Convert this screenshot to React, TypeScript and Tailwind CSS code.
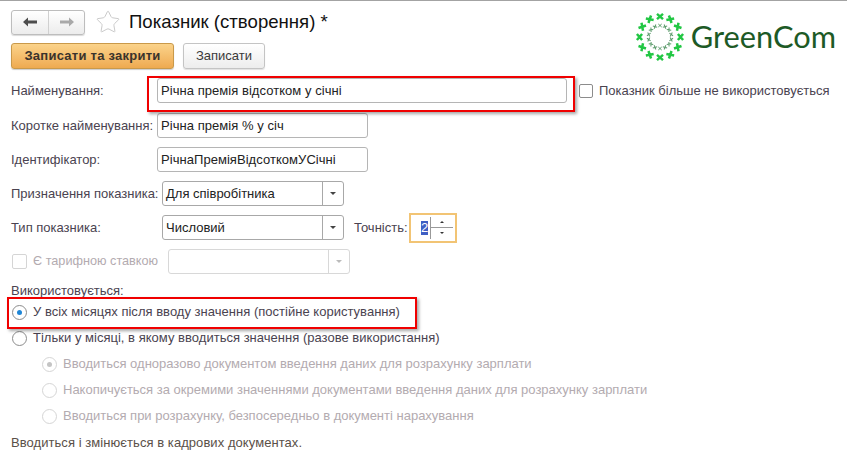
import { Star } from "lucide-react";

const outerAngles = Array.from({ length: 12 }, (_, i) => i * 30);
const innerAngles = Array.from({ length: 14 }, (_, i) => (i * 360) / 14);

function Logo() {
  return (
    <div className="flex items-center">
      <svg width="54" height="54" viewBox="-27 -27 54 54">
        {outerAngles.map((a) => (
          <g key={a} transform={`rotate(${a}) translate(0 -20.5)`} stroke="#22c744" strokeWidth="2.5">
            <path d="M-3 -2.6L3 2.6M-3 2.6L3 -2.6" />
          </g>
        ))}
        {innerAngles.map((a) => (
          <g key={a} transform={`rotate(${a}) translate(0 -11.5)`} stroke="#5a9a6a" strokeWidth="1">
            <path d="M-1.7 -1.5L1.7 1.5M-1.7 1.5L1.7 -1.5" />
          </g>
        ))}
      </svg>
      <span className="ml-[4px] font-['Lato',sans-serif] text-[30.8px] leading-none text-[#1d5a26]">GreenCom</span>
    </div>
  );
}

function TextInput({ value, className }: { value: string; className: string }) {
  return (
    <div className={`flex h-[25px] items-center rounded-[3px] border border-[#b5b5b5] bg-white pl-[3px] text-[13px] tracking-[0.05px] text-[#222] ${className}`}>
      {value}
    </div>
  );
}

function Combo({ value, disabled, className }: { value?: string; disabled?: boolean; className: string }) {
  return (
    <div className={`flex h-[25px] w-[182px] items-center rounded-[3px] border bg-white ${disabled ? "border-[#d8d8d8]" : "border-[#a8a8a8]"} ${className}`}>
      <span className="flex-1 pl-[3px] text-[13px] text-[#222]">{value}</span>
      <span className={`flex h-full w-[21px] items-center justify-center border-l ${disabled ? "border-[#d8d8d8]" : "border-[#a8a8a8]"}`}>
        <span className={`border-x-[3px] border-t-[3px] border-x-transparent ${disabled ? "border-t-[#bbb]" : "border-t-[#444]"}`} />
      </span>
    </div>
  );
}

function Radio({ checked, disabled }: { checked?: boolean; disabled?: boolean }) {
  return (
    <span className={`flex size-[15px] shrink-0 items-center justify-center rounded-full border bg-white ${disabled ? "border-[#d5d5d5]" : "border-[#8c8c8c]"}`}>
      {checked && <span className={`size-[5px] rounded-full ${disabled ? "bg-[#c4c4c4]" : "bg-[#1f86d6]"}`} />}
    </span>
  );
}

function RadioRow({ label, checked, disabled, className }: { label: string; checked?: boolean; disabled?: boolean; className: string }) {
  return (
    <div className={`flex items-center gap-[6px] text-[13px] leading-[16px] ${disabled ? "text-[#b3abb0]" : "tracking-[0.02px] text-[#4a4350]"} ${className}`}>
      <Radio checked={checked} disabled={disabled} />
      <span>{label}</span>
    </div>
  );
}

function Label({ children, className }: { children: string; className: string }) {
  return <span className={`shrink-0 text-[13px] text-[#4a4350] ${className}`}>{children}</span>;
}

export default function App() {
  return (
    <div className="relative h-[464px] w-[847px] overflow-hidden border-t border-[#a3a3a3] bg-white font-['Liberation_Sans',Arial,sans-serif]">
      <div className="flex h-[42px] items-start justify-between pl-[11px] pr-[11px]">
        <div className="flex items-center pt-[8px]">
          <div className="flex h-[25px] w-[74px] rounded-[3px] border border-[#bdbdbd] bg-gradient-to-b from-white to-[#ececec] shadow-[0_1px_1px_rgba(0,0,0,0.15)]">
            <span className="flex w-[37px] items-center justify-center border-r border-[#d0d0d0]">
              <svg width="14" height="10" viewBox="0 0 14 10"><path d="M0 5L5 0.5V3.5H14V6.5H5V9.5Z" fill="#4d4d4d" /></svg>
            </span>
            <span className="flex flex-1 items-center justify-center">
              <svg width="14" height="10" viewBox="0 0 14 10"><path d="M14 5L9 0.5V3.5H0V6.5H9V9.5Z" fill="#a9a9a9" /></svg>
            </span>
          </div>
          <Star className="ml-[10px] size-[26px] text-[#c9c9c9]" strokeWidth={0.9} />
          <span className="ml-[8px] text-[18.6px] leading-none text-[#111]">Показник (створення) *</span>
        </div>
        <div className="pt-[9px]"><Logo /></div>
      </div>

      <div className="flex gap-[9px] pl-[11px]">
        <button className="h-[26px] w-[163px] rounded-[3px] border border-[#c9994a] bg-gradient-to-b from-[#fbd38a] to-[#eeaa50] text-[13px] font-bold tracking-[0.25px] text-[#3a332c] shadow-[0_1px_1px_rgba(0,0,0,0.2)]">
          Записати та закрити
        </button>
        <button className="h-[26px] w-[82px] rounded-[3px] border border-[#c4c4c4] bg-gradient-to-b from-white to-[#ededed] text-[13px] text-[#3a3a3a] shadow-[0_1px_1px_rgba(0,0,0,0.12)]">
          Записати
        </button>
      </div>

      <div className="mt-[9px] flex flex-col pl-[11px]">
        <div className="flex h-[25px] items-center">
          <Label className="w-[146px]">Найменування:</Label>
          <TextInput value="Річна премія відсотком у січні" className="w-[410px]" />
          <span className="ml-[12px] size-[14px] rounded-[2px] border border-[#8c8c8c] bg-white" />
          <span className="ml-[6px] text-[13px] text-[#4a4350]">Показник більше не використовується</span>
        </div>
        <div className="mt-[10px] flex h-[25px] items-center">
          <Label className="w-[146px]">Коротке найменування:</Label>
          <TextInput value="Річна премія % у січ" className="w-[211px]" />
        </div>
        <div className="mt-[9px] flex h-[25px] items-center">
          <Label className="w-[146px]">Ідентифікатор:</Label>
          <TextInput value="РічнаПреміяВідсоткомУСічні" className="w-[211px]" />
        </div>
        <div className="mt-[9px] flex h-[25px] items-center">
          <Label className="w-[151px]">Призначення показника:</Label>
          <Combo value="Для співробітника" className="" />
        </div>
        <div className="mt-[9px] flex h-[25px] items-center">
          <Label className="w-[151px]">Тип показника:</Label>
          <Combo value="Числовий" className="" />
          <Label className="ml-[10px] w-[55px]">Точність:</Label>
          <div className="flex h-[30px] w-[48px] items-center border-2 border-[#f2c474] pl-[10px] pr-[2px]">
            <span className="bg-[#3f5fc4] text-[13px] leading-[14px] text-white">2</span>
            <span className="ml-[2px] flex h-[22px] flex-1 flex-col items-center border-l border-[#999]">
              <span className="flex h-1/2 w-full items-center justify-center border-b border-[#999]">
                <span className="border-x-[2px] border-b-[2px] border-x-transparent border-b-[#333]" />
              </span>
              <span className="flex h-1/2 w-full items-center justify-center">
                <span className="border-x-[2px] border-t-[2px] border-x-transparent border-t-[#333]" />
              </span>
            </span>
          </div>
        </div>
        <div className="mt-[9px] flex h-[25px] items-center">
          <span className="ml-[1px] size-[15px] rounded-[2px] border border-[#d5d5d5] bg-white" />
          <span className="ml-[6px] w-[135px] text-[12.7px] text-[#b3abb0]">Є тарифною ставкою</span>
          <Combo disabled className="" />
        </div>
        <span className="mt-[9px] text-[13px] leading-[16px] text-[#4a4350]">Використовується:</span>
        <RadioRow checked label="У всіх місяцях після вводу значення (постійне користування)" className="ml-[1px] mt-[5px]" />
        <RadioRow label="Тільки у місяці, в якому вводиться значення (разове використання)" className="ml-[1px] mt-[10px]" />
        <RadioRow disabled checked label="Вводиться одноразово документом введення даних для розрахунку зарплати" className="ml-[31px] mt-[10px]" />
        <RadioRow disabled label="Накопичується за окремими значеннями документами введення даних для розрахунку зарплати" className="ml-[31px] mt-[10px]" />
        <RadioRow disabled label="Вводиться при розрахунку, безпосередньо в документі нарахування" className="ml-[31px] mt-[10px]" />
        <span className="mt-[11px] text-[13px] leading-[16px] tracking-[0.06px] text-[#5a5048]">Вводиться і змінюється в кадрових документах.</span>
      </div>

      {/* red callouts drawn over the form */}
      <div className="pointer-events-none absolute left-[147px] top-[75px] h-[36px] w-[428px] border-[2px] border-[#f00000] shadow-[2px_2px_3px_rgba(0,0,0,0.35)]" />
      <div className="pointer-events-none absolute left-[7px] top-[296px] h-[32px] w-[410px] border-[2px] border-[#f00000] shadow-[2px_2px_3px_rgba(0,0,0,0.35)]" />
    </div>
  );
}
